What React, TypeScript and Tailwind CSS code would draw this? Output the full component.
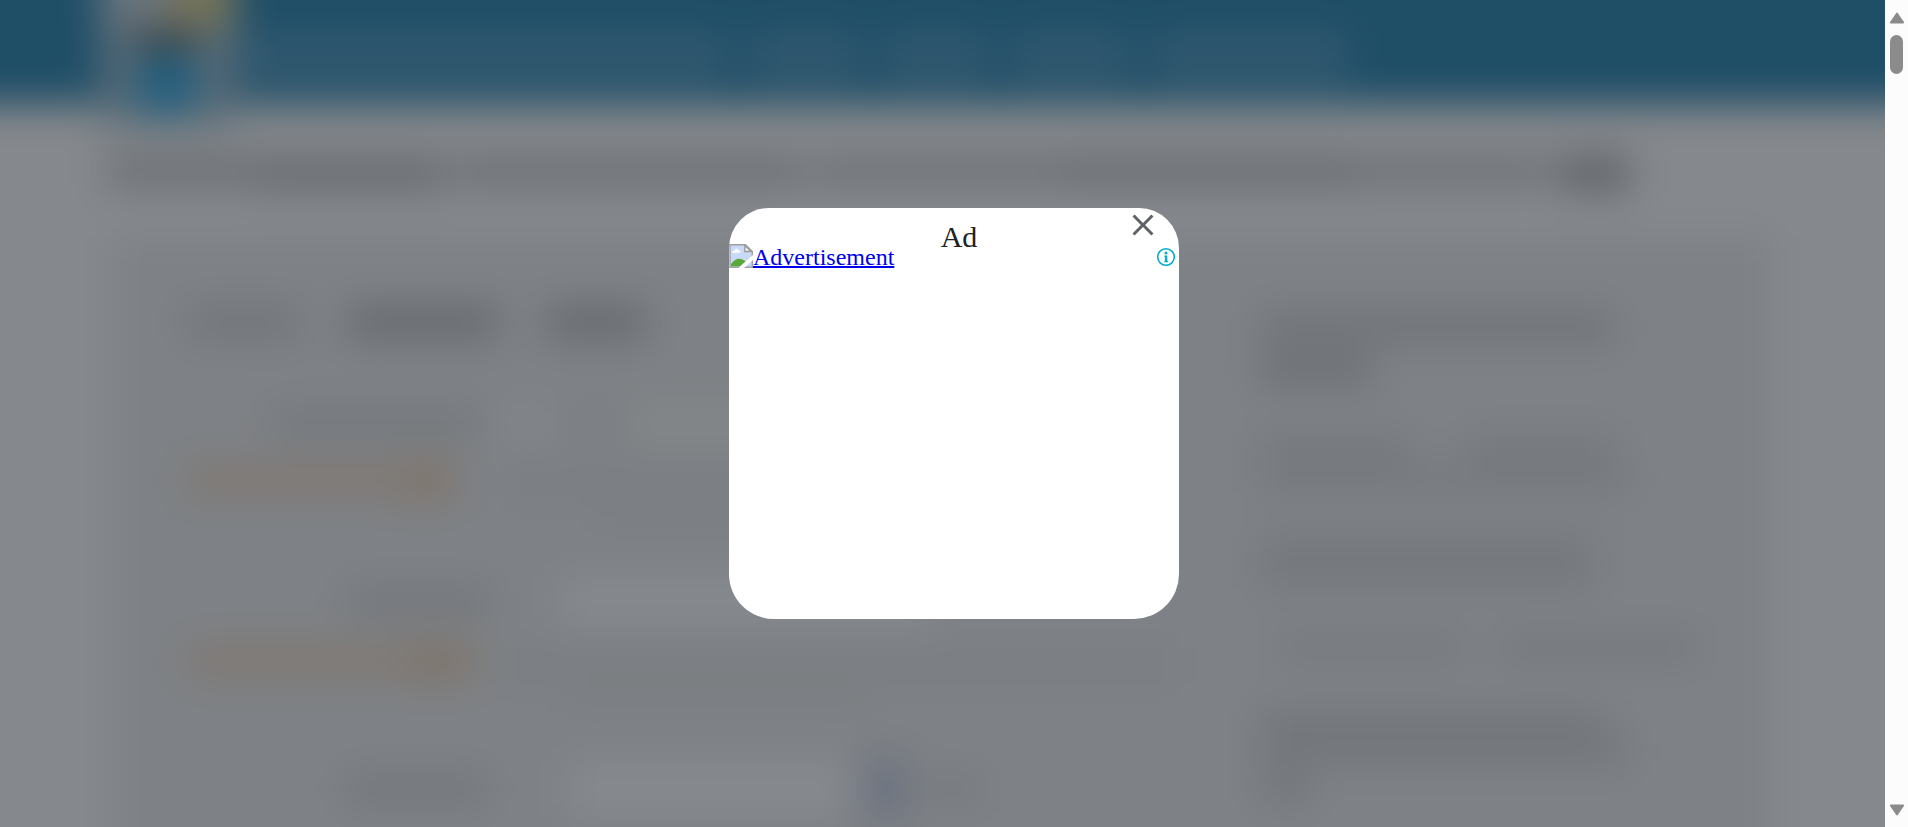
import React from 'react';

function Bar({ className }: { className: string }) {
  return <div className={`shrink-0 ${className}`} />;
}

function Header() {
  return (
    <header className="flex h-[164px] bg-[#1f4e67] pl-[160px]">
      <div className="flex h-[184px] w-[136px] shrink-0 flex-col bg-[#566a77]">
        <div className="flex h-[88px] shrink-0">
          <div className="w-[68px] bg-[#6a757e]" />
          <div className="flex-1 bg-[#77745a]" />
        </div>
        <div className="ml-[34px] h-6 w-[64px] shrink-0 bg-[#374247]" />
        <div className="ml-[34px] h-[64px] w-[66px] shrink-0 rounded-full bg-[#225f7e]" />
      </div>
      <nav className="mt-[92px] flex h-[52px] gap-[22px]">
        <Bar className="w-[492px] bg-[#30586f]" />
        <Bar className="w-[110px] bg-[#30586f]" />
        <Bar className="w-[106px] bg-[#30586f]" />
        <Bar className="w-[120px] bg-[#30586f]" />
        <Bar className="w-[196px] bg-[#30586f]" />
      </nav>
    </header>
  );
}

function MainColumn() {
  return (
    <div className="w-[1148px] shrink-0 pt-[70px] pl-[76px]">
      <div className="flex h-8 gap-12">
        <Bar className="w-[112px] bg-[#717478]" />
        <Bar className="w-[150px] bg-[#65686c]" />
        <Bar className="w-[100px] bg-[#65686c]" />
      </div>
      <div className="mt-[69px] flex h-8 items-center pl-[84px]">
        <Bar className="h-[26px] w-[206px] bg-[#73777b]" />
        <Bar className="ml-6 h-10 w-[58px] bg-[#828589]" />
        <Bar className="h-6 w-[66px] bg-[#7a7d81]" />
        <Bar className="h-10 w-[260px] bg-[#848789]" />
      </div>
      <div className="mt-[27px] flex items-start">
        <Bar className="h-7 w-[218px] bg-[#80776f]" />
        <Bar className="-mt-1 h-9 w-[46px] bg-[#807367]" />
        <Bar className="ml-[50px] h-[34px] w-[640px] bg-[#7b7e82]" />
      </div>
      <div className="flex h-10 pt-1 pl-[410px]">
        <Bar className="h-6 w-[230px] bg-[#7b7e82]" />
      </div>
      <div className="mt-[40px] flex h-[44px] items-center pl-[158px]">
        <Bar className="h-7 w-[144px] bg-[#73767a]" />
        <Bar className="ml-[70px] h-[50px] w-[370px] bg-[#868a8e]" />
      </div>
      <div className="mt-[23px] flex items-start">
        <Bar className="h-7 w-[218px] bg-[#80776f]" />
        <Bar className="-mt-1 h-9 w-[66px] bg-[#7f7469]" />
        <Bar className="ml-[28px] h-[38px] w-[680px] bg-[#7b7e82]" />
      </div>
      <div className="mt-1 flex h-5 pl-[380px]">
        <Bar className="h-4 w-[300px] bg-[#7b7e81]" />
      </div>
      <div className="mt-[54px] flex h-[52px] items-center pl-[158px]">
        <Bar className="h-7 w-[140px] bg-[#72757a]" />
        <Bar className="ml-[82px] h-[56px] w-[284px] bg-[#868a8e]" />
        <Bar className="ml-3 h-[64px] w-[42px] bg-[#6b7280]" />
        <Bar className="ml-5 h-6 w-[56px] bg-[#75787c]" />
      </div>
    </div>
  );
}

function Sidebar() {
  return (
    <aside className="flex w-[500px] shrink-0 flex-col pt-[77px]">
      <Bar className="h-7 w-[354px] bg-[#6e7175]" />
      <Bar className="mt-[14px] h-7 w-[112px] bg-[#6a6d71]" />
      <div className="mt-[50px] flex h-8 gap-[56px]">
        <Bar className="w-[150px] bg-[#76797d]" />
        <Bar className="w-[150px] bg-[#76797d]" />
      </div>
      <Bar className="h-7 w-[370px] bg-[#76797d]" />
      <Bar className="mt-[42px] h-[54px] w-[334px] bg-[#75787c]" />
      <div className="mt-[46px] flex h-6 gap-[32px] pl-4">
        <Bar className="w-[190px] bg-[#75787c]" />
        <Bar className="w-[200px] bg-[#74777b]" />
      </div>
      <Bar className="mt-[50px] h-7 w-[344px] bg-[#73767a]" />
      <Bar className="h-7 w-[370px] bg-[#73767a]" />
      <Bar className="mt-2 h-7 w-[50px] bg-[#717478]" />
    </aside>
  );
}

function Page() {
  return (
    <div className="-m-[60px] h-[947px] w-[2005px] overflow-hidden bg-[#85888c] blur-[19px]">
      <Header />
      <div className="flex h-[132px] pt-[51px] pl-[166px]">
        <Bar className="h-8 w-[150px] bg-[#6c6f73]" />
        <Bar className="h-9 w-[190px] bg-[#696c70]" />
        <Bar className="ml-2 h-8 w-[350px] bg-[#6d7074]" />
        <Bar className="ml-2 h-8 w-[250px] bg-[#6f7276]" />
        <Bar className="h-8 w-[290px] bg-[#6a6d71]" />
        <Bar className="h-8 w-[190px] bg-[#6f7276]" />
        <Bar className="h-7 w-[20px] bg-[#75787c]" />
        <Bar className="h-9 w-[68px] bg-[#606367]" />
      </div>
      <main className="ml-[172px] flex h-[700px] w-[1660px] overflow-hidden bg-[#7e8185]">
        <MainColumn />
        <Sidebar />
      </main>
    </div>
  );
}

function BrokenImage() {
  return (
    <svg className="h-6 w-6 shrink-0" viewBox="0 0 24 24">
      <path d="M1 0.800H16.500L23.300 7.500V23.200H1Z" fill="#c9daf8" stroke="#a0a0a0" strokeWidth="1.400" />
      <path d="M3 9c0-1.700 1.500-2 2.200-2C6 4 9 4.300 9.300 6.300c1.700-.2 2.400.9 2.400 2.200Z" fill="#fff" />
      <path d="M2 22.300V20c3.500-5.500 9.500-7.500 14.500-2.500L11 22.300Z" fill="#58aa37" />
      <path d="M9.500 24L24 11V16L15 24Z" fill="#fff" />
      <path d="M15.800 1.500V7.500H22.300Z" fill="#f4f4f4" stroke="#999" strokeWidth="1.300" />
    </svg>
  );
}

function AdDialog() {
  return (
    <div className="relative flex h-[411px] w-[450px] flex-col rounded-t-[40px] rounded-b-[45px] bg-white">
      <div className="flex h-9 shrink-0 justify-center pt-[12px] pl-[10px]">
        <span className="font-['Liberation_Serif',serif] text-[30px] leading-[34px] text-[#202124]">Ad</span>
      </div>
      <div className="flex h-6 items-start justify-between">
        <a className="flex cursor-pointer items-start">
          <BrokenImage />
          <span className="font-['Liberation_Serif',serif] text-[24px] leading-[27px] text-[#0000ee] underline decoration-2">
            Advertisement
          </span>
        </a>
        <svg className="mt-[3px] mr-[3px] h-5 w-5" viewBox="0 0 20 20">
          <circle cx="10" cy="10" r="8.300" fill="none" stroke="#00aecd" strokeWidth="1.600" />
          <circle cx="10" cy="6" r="1.500" fill="#00aecd" />
          <path d="M8.300 8.400H11.300V13.800H11.900V15.200H8.300V13.800H8.900V9.800H8.300Z" fill="#00aecd" />
        </svg>
      </div>
      <button aria-label="Close" className="absolute -top-px right-[18px] h-9 w-9">
        <svg className="h-full w-full" viewBox="0 0 24 24" fill="#5f6368">
          <path d="M19 6.410L17.590 5 12 10.590 6.410 5 5 6.410 10.590 12 5 17.590 6.410 19 12 13.410 17.590 19 19 17.590 13.410 12z" />
        </svg>
      </button>
    </div>
  );
}

function Scrollbar() {
  return (
    <div className="flex h-full w-[23px] shrink-0 flex-col items-center bg-[#fcfcfc] pt-3 pb-[11px]">
      <svg className="h-3 w-4" viewBox="0 0 16 12">
        <path d="M8 1.500L14.200 10.500H1.800Z" fill="#8b8b8b" stroke="#8b8b8b" strokeWidth="1.800" strokeLinejoin="round" />
      </svg>
      <div className="mt-[11px] h-[39px] w-[13px] rounded-full bg-[#8b8b8b]" />
      <svg className="mt-auto h-3 w-4" viewBox="0 0 16 12">
        <path d="M8 10.500L14.200 1.500H1.800Z" fill="#8b8b8b" stroke="#8b8b8b" strokeWidth="1.800" strokeLinejoin="round" />
      </svg>
    </div>
  );
}

export default function App() {
  return (
    <div className="relative flex h-[827px] w-[1908px] overflow-hidden">
      <div className="h-full w-[1885px] shrink-0 overflow-hidden">
        <Page />
      </div>
      <Scrollbar />
      <div className="absolute inset-0 flex items-center justify-center">
        <AdDialog />
      </div>
    </div>
  );
}
